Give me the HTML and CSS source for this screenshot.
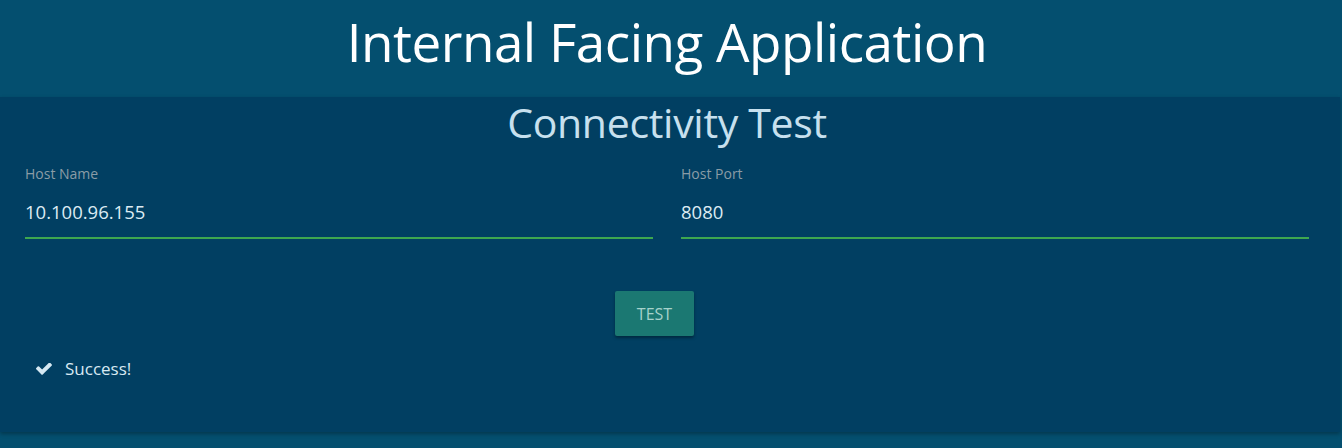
FILE: index.html
```html
<!DOCTYPE html>
<html>
<head>
<meta charset="utf-8">
<link rel="stylesheet" href="styles.css">
</head>
<body>
<header class="app-header">
  <h1 class="app-title">Internal Facing Application</h1>
</header>
<main class="card">
  <h2 class="card-title">Connectivity Test</h2>
  <div class="fields">
    <div class="field">
      <label class="field-label">Host Name</label>
      <div class="field-value">10.100.96.155</div>
    </div>
    <div class="field">
      <label class="field-label">Host Port</label>
      <div class="field-value">8080</div>
    </div>
  </div>
  <div class="actions">
    <button class="btn">TEST</button>
  </div>
  <div class="status">
    <svg class="check" viewBox="120 390 1560 1140" width="16" height="12"><path fill="#d5e8f2" d="M1671 566q0 40-28 68l-724 724-136 136q-28 28-68 28t-68-28l-136-136-362-362q-28-28-28-68t28-68l136-136q28-28 68-28t68 28l294 295 656-657q28-28 68-28t68 28l136 136q28 28 28 68z"/></svg>
    <span>Success!</span>
  </div>
</main>
</body>
</html>
```
FILE: styles.css
```css
html, body {
  margin: 0;
  padding: 0;
}
body {
  background: #044f6f;
  font-family: "Open Sans", "Noto Sans", sans-serif;
  width: 1342px;
  height: 448px;
  overflow: hidden;
}
.app-header {
  height: 97px;
  display: flex;
  justify-content: center;
  align-items: center;
  padding-right: 8px;
}
.app-title {
  margin: 0;
  color: #ffffff;
  font-weight: 400;
  font-size: 53px;
  letter-spacing: -0.5px;
  line-height: 1;
  padding-bottom: 14px;
}
.card {
  width: 1340px;
  height: 335px;
  background: #013f62;
  box-shadow: 0 2px 4px rgba(0,0,0,0.3);
  box-sizing: border-box;
  padding-top: 1px;
}
.card-title {
  margin: 0;
  text-align: center;
  color: #c7e0ee;
  font-weight: 400;
  font-size: 41px;
  line-height: 48px;
  letter-spacing: -0.3px;
  padding-right: 6px;
}
.fields {
  display: flex;
  gap: 28px;
  padding: 19px 31px 0 25px;
}
.field {
  flex: 1;
  border-bottom: 2px solid #3ea74f;
  padding-bottom: 12px;
}
.field-label {
  display: block;
  color: #8a9ca6;
  font-size: 14px;
  line-height: 18px;
}
.field-value {
  color: #dcebf3;
  font-size: 18.5px;
  line-height: 26px;
  margin-top: 16px;
}
.actions {
  display: flex;
  justify-content: center;
  padding: 52px 31px 0 0;
}
.btn {
  width: 79px;
  height: 45px;
  border: none;
  border-radius: 2px;
  background: #1b7872;
  color: #a6d2cb;
  font-family: inherit;
  font-size: 16px;
  box-shadow: 0 2px 3px rgba(0,0,0,0.35);
}
.status {
  display: flex;
  align-items: center;
  gap: 13px;
  padding: 21px 0 0 36px;
  color: #d8e9f2;
  font-size: 17px;
}
.check {
  display: block;
}
```
